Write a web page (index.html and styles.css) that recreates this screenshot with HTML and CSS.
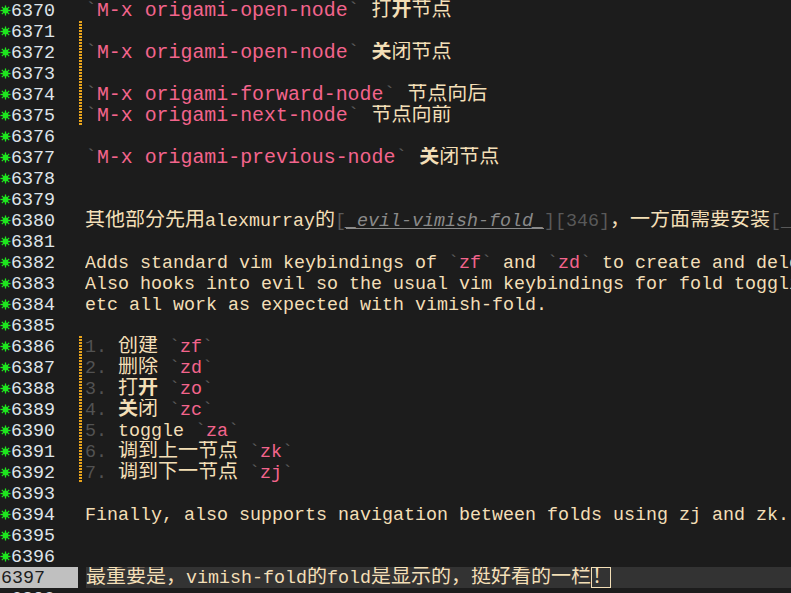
FILE: index.html
```html
<!DOCTYPE html>
<html lang="zh">
<head>
<meta charset="utf-8">
<title>vimish-fold</title>
<link rel="stylesheet" href="styles.css">
</head>
<body>
<div class="editor">
  <div class="row"><div class="gutter"><span class="star"><svg viewBox="0 0 12 12" width="12" height="12"><g stroke="#1ee61e" stroke-width="1.4"><line x1="6" y1="0.5" x2="6" y2="11.5"/><line x1="0.5" y1="6" x2="11.5" y2="6"/><line x1="2" y1="2" x2="10" y2="10"/><line x1="10" y1="2" x2="2" y2="10"/></g><circle cx="6" cy="6" r="3.2" fill="#1ee61e"/></svg></span><span class="num">6370</span></div><div class="fringe"></div><div class="text"><span class="big"><span class="bt">`</span><span class="pk">M-x origami-open-node</span><span class="bt">`</span> </span><span class="c">打<b>开</b>节点</span></div></div>
  <div class="row"><div class="gutter"><span class="star"><svg viewBox="0 0 12 12" width="12" height="12"><g stroke="#1ee61e" stroke-width="1.4"><line x1="6" y1="0.5" x2="6" y2="11.5"/><line x1="0.5" y1="6" x2="11.5" y2="6"/><line x1="2" y1="2" x2="10" y2="10"/><line x1="10" y1="2" x2="2" y2="10"/></g><circle cx="6" cy="6" r="3.2" fill="#1ee61e"/></svg></span><span class="num">6371</span></div><div class="fringe guide"></div><div class="text"></div></div>
  <div class="row"><div class="gutter"><span class="star"><svg viewBox="0 0 12 12" width="12" height="12"><g stroke="#1ee61e" stroke-width="1.4"><line x1="6" y1="0.5" x2="6" y2="11.5"/><line x1="0.5" y1="6" x2="11.5" y2="6"/><line x1="2" y1="2" x2="10" y2="10"/><line x1="10" y1="2" x2="2" y2="10"/></g><circle cx="6" cy="6" r="3.2" fill="#1ee61e"/></svg></span><span class="num">6372</span></div><div class="fringe guide"></div><div class="text"><span class="big"><span class="bt">`</span><span class="pk">M-x origami-open-node</span><span class="bt">`</span> </span><span class="c"><b>关</b>闭节点</span></div></div>
  <div class="row"><div class="gutter"><span class="star"><svg viewBox="0 0 12 12" width="12" height="12"><g stroke="#1ee61e" stroke-width="1.4"><line x1="6" y1="0.5" x2="6" y2="11.5"/><line x1="0.5" y1="6" x2="11.5" y2="6"/><line x1="2" y1="2" x2="10" y2="10"/><line x1="10" y1="2" x2="2" y2="10"/></g><circle cx="6" cy="6" r="3.2" fill="#1ee61e"/></svg></span><span class="num">6373</span></div><div class="fringe guide"></div><div class="text"></div></div>
  <div class="row"><div class="gutter"><span class="star"><svg viewBox="0 0 12 12" width="12" height="12"><g stroke="#1ee61e" stroke-width="1.4"><line x1="6" y1="0.5" x2="6" y2="11.5"/><line x1="0.5" y1="6" x2="11.5" y2="6"/><line x1="2" y1="2" x2="10" y2="10"/><line x1="10" y1="2" x2="2" y2="10"/></g><circle cx="6" cy="6" r="3.2" fill="#1ee61e"/></svg></span><span class="num">6374</span></div><div class="fringe guide"></div><div class="text"><span class="big"><span class="bt">`</span><span class="pk">M-x origami-forward-node</span><span class="bt">`</span> </span><span class="c">节点向后</span></div></div>
  <div class="row"><div class="gutter"><span class="star"><svg viewBox="0 0 12 12" width="12" height="12"><g stroke="#1ee61e" stroke-width="1.4"><line x1="6" y1="0.5" x2="6" y2="11.5"/><line x1="0.5" y1="6" x2="11.5" y2="6"/><line x1="2" y1="2" x2="10" y2="10"/><line x1="10" y1="2" x2="2" y2="10"/></g><circle cx="6" cy="6" r="3.2" fill="#1ee61e"/></svg></span><span class="num">6375</span></div><div class="fringe guide"></div><div class="text"><span class="big"><span class="bt">`</span><span class="pk">M-x origami-next-node</span><span class="bt">`</span> </span><span class="c">节点向前</span></div></div>
  <div class="row"><div class="gutter"><span class="star"><svg viewBox="0 0 12 12" width="12" height="12"><g stroke="#1ee61e" stroke-width="1.4"><line x1="6" y1="0.5" x2="6" y2="11.5"/><line x1="0.5" y1="6" x2="11.5" y2="6"/><line x1="2" y1="2" x2="10" y2="10"/><line x1="10" y1="2" x2="2" y2="10"/></g><circle cx="6" cy="6" r="3.2" fill="#1ee61e"/></svg></span><span class="num">6376</span></div><div class="fringe"></div><div class="text"></div></div>
  <div class="row"><div class="gutter"><span class="star"><svg viewBox="0 0 12 12" width="12" height="12"><g stroke="#1ee61e" stroke-width="1.4"><line x1="6" y1="0.5" x2="6" y2="11.5"/><line x1="0.5" y1="6" x2="11.5" y2="6"/><line x1="2" y1="2" x2="10" y2="10"/><line x1="10" y1="2" x2="2" y2="10"/></g><circle cx="6" cy="6" r="3.2" fill="#1ee61e"/></svg></span><span class="num">6377</span></div><div class="fringe"></div><div class="text"><span class="big"><span class="bt">`</span><span class="pk">M-x origami-previous-node</span><span class="bt">`</span> </span><span class="c"><b>关</b>闭节点</span></div></div>
  <div class="row"><div class="gutter"><span class="star"><svg viewBox="0 0 12 12" width="12" height="12"><g stroke="#1ee61e" stroke-width="1.4"><line x1="6" y1="0.5" x2="6" y2="11.5"/><line x1="0.5" y1="6" x2="11.5" y2="6"/><line x1="2" y1="2" x2="10" y2="10"/><line x1="10" y1="2" x2="2" y2="10"/></g><circle cx="6" cy="6" r="3.2" fill="#1ee61e"/></svg></span><span class="num">6378</span></div><div class="fringe"></div><div class="text"></div></div>
  <div class="row"><div class="gutter"><span class="star"><svg viewBox="0 0 12 12" width="12" height="12"><g stroke="#1ee61e" stroke-width="1.4"><line x1="6" y1="0.5" x2="6" y2="11.5"/><line x1="0.5" y1="6" x2="11.5" y2="6"/><line x1="2" y1="2" x2="10" y2="10"/><line x1="10" y1="2" x2="2" y2="10"/></g><circle cx="6" cy="6" r="3.2" fill="#1ee61e"/></svg></span><span class="num">6379</span></div><div class="fringe"></div><div class="text"></div></div>
  <div class="row"><div class="gutter"><span class="star"><svg viewBox="0 0 12 12" width="12" height="12"><g stroke="#1ee61e" stroke-width="1.4"><line x1="6" y1="0.5" x2="6" y2="11.5"/><line x1="0.5" y1="6" x2="11.5" y2="6"/><line x1="2" y1="2" x2="10" y2="10"/><line x1="10" y1="2" x2="2" y2="10"/></g><circle cx="6" cy="6" r="3.2" fill="#1ee61e"/></svg></span><span class="num">6380</span></div><div class="fringe"></div><div class="text"><span class="c">其他部分先用</span>alexmurray<span class="c">的</span><span class="ln">[</span><span class="li">_evil-vimish-fold_</span><span class="ln">][346]</span><span class="c">，一方面需要安装</span><span class="ln">[_</span></div></div>
  <div class="row"><div class="gutter"><span class="star"><svg viewBox="0 0 12 12" width="12" height="12"><g stroke="#1ee61e" stroke-width="1.4"><line x1="6" y1="0.5" x2="6" y2="11.5"/><line x1="0.5" y1="6" x2="11.5" y2="6"/><line x1="2" y1="2" x2="10" y2="10"/><line x1="10" y1="2" x2="2" y2="10"/></g><circle cx="6" cy="6" r="3.2" fill="#1ee61e"/></svg></span><span class="num">6381</span></div><div class="fringe"></div><div class="text"></div></div>
  <div class="row"><div class="gutter"><span class="star"><svg viewBox="0 0 12 12" width="12" height="12"><g stroke="#1ee61e" stroke-width="1.4"><line x1="6" y1="0.5" x2="6" y2="11.5"/><line x1="0.5" y1="6" x2="11.5" y2="6"/><line x1="2" y1="2" x2="10" y2="10"/><line x1="10" y1="2" x2="2" y2="10"/></g><circle cx="6" cy="6" r="3.2" fill="#1ee61e"/></svg></span><span class="num">6382</span></div><div class="fringe"></div><div class="text">Adds standard vim keybindings of <span class="bt">`</span><span class="pk">zf</span><span class="bt">`</span> and <span class="bt">`</span><span class="pk">zd</span><span class="bt">`</span> to create and delete folds.</div></div>
  <div class="row"><div class="gutter"><span class="star"><svg viewBox="0 0 12 12" width="12" height="12"><g stroke="#1ee61e" stroke-width="1.4"><line x1="6" y1="0.5" x2="6" y2="11.5"/><line x1="0.5" y1="6" x2="11.5" y2="6"/><line x1="2" y1="2" x2="10" y2="10"/><line x1="10" y1="2" x2="2" y2="10"/></g><circle cx="6" cy="6" r="3.2" fill="#1ee61e"/></svg></span><span class="num">6383</span></div><div class="fringe"></div><div class="text">Also hooks into evil so the usual vim keybindings for fold toggling,</div></div>
  <div class="row"><div class="gutter"><span class="star"><svg viewBox="0 0 12 12" width="12" height="12"><g stroke="#1ee61e" stroke-width="1.4"><line x1="6" y1="0.5" x2="6" y2="11.5"/><line x1="0.5" y1="6" x2="11.5" y2="6"/><line x1="2" y1="2" x2="10" y2="10"/><line x1="10" y1="2" x2="2" y2="10"/></g><circle cx="6" cy="6" r="3.2" fill="#1ee61e"/></svg></span><span class="num">6384</span></div><div class="fringe"></div><div class="text">etc all work as expected with vimish-fold.</div></div>
  <div class="row"><div class="gutter"><span class="star"><svg viewBox="0 0 12 12" width="12" height="12"><g stroke="#1ee61e" stroke-width="1.4"><line x1="6" y1="0.5" x2="6" y2="11.5"/><line x1="0.5" y1="6" x2="11.5" y2="6"/><line x1="2" y1="2" x2="10" y2="10"/><line x1="10" y1="2" x2="2" y2="10"/></g><circle cx="6" cy="6" r="3.2" fill="#1ee61e"/></svg></span><span class="num">6385</span></div><div class="fringe"></div><div class="text"></div></div>
  <div class="row"><div class="gutter"><span class="star"><svg viewBox="0 0 12 12" width="12" height="12"><g stroke="#1ee61e" stroke-width="1.4"><line x1="6" y1="0.5" x2="6" y2="11.5"/><line x1="0.5" y1="6" x2="11.5" y2="6"/><line x1="2" y1="2" x2="10" y2="10"/><line x1="10" y1="2" x2="2" y2="10"/></g><circle cx="6" cy="6" r="3.2" fill="#1ee61e"/></svg></span><span class="num">6386</span></div><div class="fringe guide"></div><div class="text"><span class="n">1.</span> <span class="c">创建</span> <span class="bt">`</span><span class="pk">zf</span><span class="bt">`</span></div></div>
  <div class="row"><div class="gutter"><span class="star"><svg viewBox="0 0 12 12" width="12" height="12"><g stroke="#1ee61e" stroke-width="1.4"><line x1="6" y1="0.5" x2="6" y2="11.5"/><line x1="0.5" y1="6" x2="11.5" y2="6"/><line x1="2" y1="2" x2="10" y2="10"/><line x1="10" y1="2" x2="2" y2="10"/></g><circle cx="6" cy="6" r="3.2" fill="#1ee61e"/></svg></span><span class="num">6387</span></div><div class="fringe guide"></div><div class="text"><span class="n">2.</span> <span class="c">删除</span> <span class="bt">`</span><span class="pk">zd</span><span class="bt">`</span></div></div>
  <div class="row"><div class="gutter"><span class="star"><svg viewBox="0 0 12 12" width="12" height="12"><g stroke="#1ee61e" stroke-width="1.4"><line x1="6" y1="0.5" x2="6" y2="11.5"/><line x1="0.5" y1="6" x2="11.5" y2="6"/><line x1="2" y1="2" x2="10" y2="10"/><line x1="10" y1="2" x2="2" y2="10"/></g><circle cx="6" cy="6" r="3.2" fill="#1ee61e"/></svg></span><span class="num">6388</span></div><div class="fringe guide"></div><div class="text"><span class="n">3.</span> <span class="c">打<b>开</b></span> <span class="bt">`</span><span class="pk">zo</span><span class="bt">`</span></div></div>
  <div class="row"><div class="gutter"><span class="star"><svg viewBox="0 0 12 12" width="12" height="12"><g stroke="#1ee61e" stroke-width="1.4"><line x1="6" y1="0.5" x2="6" y2="11.5"/><line x1="0.5" y1="6" x2="11.5" y2="6"/><line x1="2" y1="2" x2="10" y2="10"/><line x1="10" y1="2" x2="2" y2="10"/></g><circle cx="6" cy="6" r="3.2" fill="#1ee61e"/></svg></span><span class="num">6389</span></div><div class="fringe guide"></div><div class="text"><span class="n">4.</span> <span class="c"><b>关</b>闭</span> <span class="bt">`</span><span class="pk">zc</span><span class="bt">`</span></div></div>
  <div class="row"><div class="gutter"><span class="star"><svg viewBox="0 0 12 12" width="12" height="12"><g stroke="#1ee61e" stroke-width="1.4"><line x1="6" y1="0.5" x2="6" y2="11.5"/><line x1="0.5" y1="6" x2="11.5" y2="6"/><line x1="2" y1="2" x2="10" y2="10"/><line x1="10" y1="2" x2="2" y2="10"/></g><circle cx="6" cy="6" r="3.2" fill="#1ee61e"/></svg></span><span class="num">6390</span></div><div class="fringe guide"></div><div class="text"><span class="n">5.</span> toggle <span class="bt">`</span><span class="pk">za</span><span class="bt">`</span></div></div>
  <div class="row"><div class="gutter"><span class="star"><svg viewBox="0 0 12 12" width="12" height="12"><g stroke="#1ee61e" stroke-width="1.4"><line x1="6" y1="0.5" x2="6" y2="11.5"/><line x1="0.5" y1="6" x2="11.5" y2="6"/><line x1="2" y1="2" x2="10" y2="10"/><line x1="10" y1="2" x2="2" y2="10"/></g><circle cx="6" cy="6" r="3.2" fill="#1ee61e"/></svg></span><span class="num">6391</span></div><div class="fringe guide"></div><div class="text"><span class="n">6.</span> <span class="c">调到上一节点</span> <span class="bt">`</span><span class="pk">zk</span><span class="bt">`</span></div></div>
  <div class="row"><div class="gutter"><span class="star"><svg viewBox="0 0 12 12" width="12" height="12"><g stroke="#1ee61e" stroke-width="1.4"><line x1="6" y1="0.5" x2="6" y2="11.5"/><line x1="0.5" y1="6" x2="11.5" y2="6"/><line x1="2" y1="2" x2="10" y2="10"/><line x1="10" y1="2" x2="2" y2="10"/></g><circle cx="6" cy="6" r="3.2" fill="#1ee61e"/></svg></span><span class="num">6392</span></div><div class="fringe guide"></div><div class="text"><span class="n">7.</span> <span class="c">调到下一节点</span> <span class="bt">`</span><span class="pk">zj</span><span class="bt">`</span></div></div>
  <div class="row"><div class="gutter"><span class="star"><svg viewBox="0 0 12 12" width="12" height="12"><g stroke="#1ee61e" stroke-width="1.4"><line x1="6" y1="0.5" x2="6" y2="11.5"/><line x1="0.5" y1="6" x2="11.5" y2="6"/><line x1="2" y1="2" x2="10" y2="10"/><line x1="10" y1="2" x2="2" y2="10"/></g><circle cx="6" cy="6" r="3.2" fill="#1ee61e"/></svg></span><span class="num">6393</span></div><div class="fringe"></div><div class="text"></div></div>
  <div class="row"><div class="gutter"><span class="star"><svg viewBox="0 0 12 12" width="12" height="12"><g stroke="#1ee61e" stroke-width="1.4"><line x1="6" y1="0.5" x2="6" y2="11.5"/><line x1="0.5" y1="6" x2="11.5" y2="6"/><line x1="2" y1="2" x2="10" y2="10"/><line x1="10" y1="2" x2="2" y2="10"/></g><circle cx="6" cy="6" r="3.2" fill="#1ee61e"/></svg></span><span class="num">6394</span></div><div class="fringe"></div><div class="text">Finally, also supports navigation between folds using zj and zk.</div></div>
  <div class="row"><div class="gutter"><span class="star"><svg viewBox="0 0 12 12" width="12" height="12"><g stroke="#1ee61e" stroke-width="1.4"><line x1="6" y1="0.5" x2="6" y2="11.5"/><line x1="0.5" y1="6" x2="11.5" y2="6"/><line x1="2" y1="2" x2="10" y2="10"/><line x1="10" y1="2" x2="2" y2="10"/></g><circle cx="6" cy="6" r="3.2" fill="#1ee61e"/></svg></span><span class="num">6395</span></div><div class="fringe"></div><div class="text"></div></div>
  <div class="row"><div class="gutter"><span class="star"><svg viewBox="0 0 12 12" width="12" height="12"><g stroke="#1ee61e" stroke-width="1.4"><line x1="6" y1="0.5" x2="6" y2="11.5"/><line x1="0.5" y1="6" x2="11.5" y2="6"/><line x1="2" y1="2" x2="10" y2="10"/><line x1="10" y1="2" x2="2" y2="10"/></g><circle cx="6" cy="6" r="3.2" fill="#1ee61e"/></svg></span><span class="num">6396</span></div><div class="fringe"></div><div class="text"></div></div>
  <div class="row cur"><div class="gutter"><span class="num">6397</span></div><div class="fringe"></div><div class="text"><span class="c">最重要是，</span>vimish-fold<span class="c">的</span>fold<span class="c">是显示的，挺好看的一栏</span><span class="cursor">！</span></div></div>
  <div class="row"><div class="gutter"><span class="star"><svg viewBox="0 0 12 12" width="12" height="12"><g stroke="#1ee61e" stroke-width="1.4"><line x1="6" y1="0.5" x2="6" y2="11.5"/><line x1="0.5" y1="6" x2="11.5" y2="6"/><line x1="2" y1="2" x2="10" y2="10"/><line x1="10" y1="2" x2="2" y2="10"/></g><circle cx="6" cy="6" r="3.2" fill="#1ee61e"/></svg></span><span class="num">6398</span></div><div class="fringe"></div><div class="text"></div></div>
</div>
</body>
</html>
```

FILE: styles.css
```css
html, body {
  margin: 0;
  padding: 0;
  background: #1c1c1c;
}
body {
  width: 791px;
  height: 593px;
  overflow: hidden;
  font-family: "Liberation Mono", "Noto Sans CJK SC", monospace;
  font-size: 18.33px;
  color: #f3dfb7;
}
.editor {
  display: flex;
  flex-direction: column;
}
.row {
  display: flex;
  height: 21px;
  line-height: 21px;
  flex: none;
}
.gutter {
  width: 77px;
  flex: none;
  display: flex;
  align-items: flex-start;
  color: #dfe4ea;
  white-space: pre;
}
.num {
  padding-top: 1px;
}
.star {
  width: 12px;
  height: 21px;
  display: flex;
  align-items: center;
  justify-content: center;
  margin-left: -1px;
}
.star svg {
  width: 11px;
  height: 11px;
}
.fringe {
  width: 8px;
  flex: none;
}
.fringe.guide {
  background-image: repeating-linear-gradient(to bottom, #e9a41c 0, #e9a41c 2px, transparent 2px, transparent 3px);
  background-repeat: no-repeat;
  background-size: 3px 100%;
  background-position: 2px 0;
}
.text {
  flex: 1;
  min-width: 0;
  padding-top: 1px;
  white-space: pre;
  overflow: hidden;
}
.cur .gutter {
  background: #c0c0c0;
  color: #1c1c1c;
  padding-left: 1px;
}
.cur .text {
  background: #333333;
}
.c {
  font-size: 20px;
  line-height: 13px;
}
.c b {
  font-weight: 700;
}
.big {
  font-size: 19.9px;
  line-height: 19px;
}
.pk {
  color: #f3648c;
}
.bt {
  color: #5a5a5a;
}
.ln {
  color: #595959;
}
.li {
  color: #8a8a8a;
  font-style: italic;
  text-decoration: underline;
  text-underline-offset: 2px;
}
.n {
  color: #525252;
}
.cursor {
  display: inline-block;
  vertical-align: top;
  box-sizing: border-box;
  width: 20px;
  height: 21px;
  margin-top: -1px;
  border: 1px solid #f3dfb7;
  font-size: 20px;
  line-height: 19px;
  text-align: center;
}
```
